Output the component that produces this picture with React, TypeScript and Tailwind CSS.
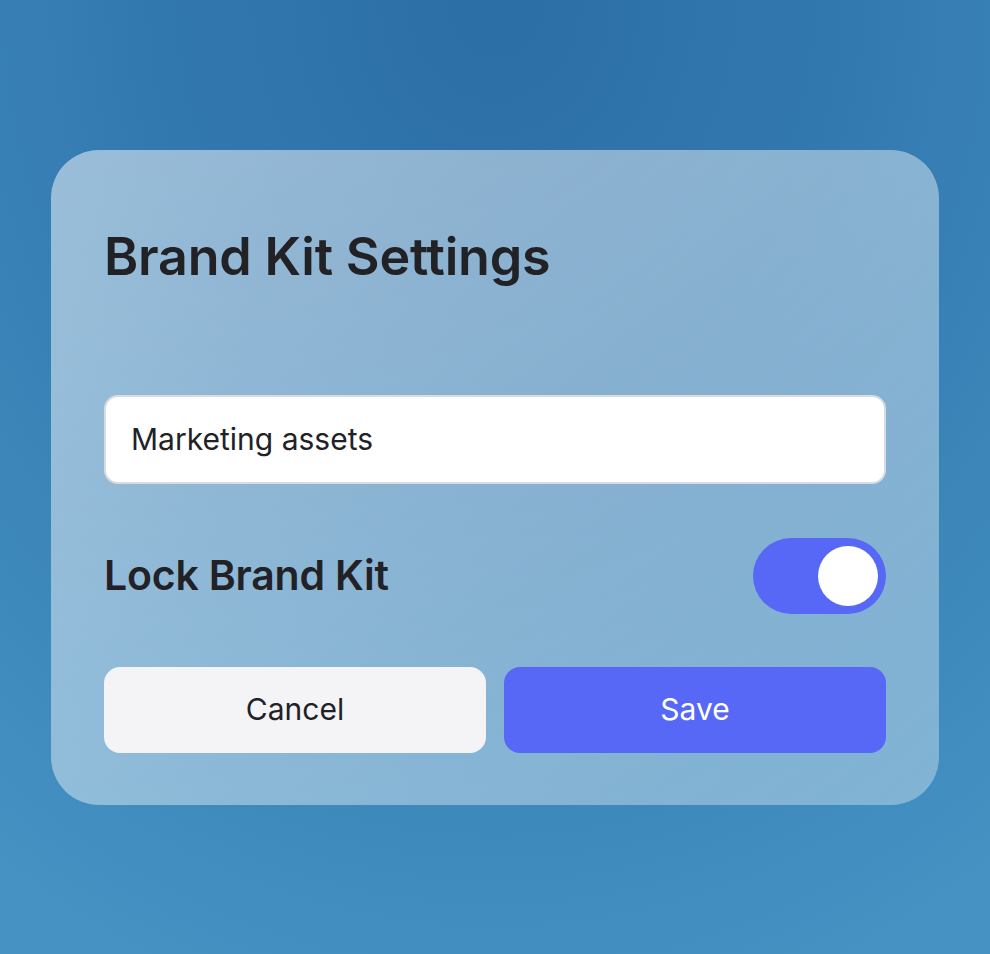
import { useState } from 'react';

export default function App() {
  const [name, setName] = useState('Marketing assets');
  const [locked, setLocked] = useState(true);

  return (
    <main
      className="h-screen w-full flex items-center justify-center bg-[radial-gradient(ellipse_90%_110%_at_50%_0%,#2c6ea6_0%,#3279b0_40%,#4592c3_100%)]"
      style={{ fontFamily: 'Inter, "Noto Sans", sans-serif' }}
    >
      <div className="w-[888px] rounded-[48px] bg-gradient-to-br from-white/50 to-white/33 px-[53px] pt-[81px] pb-[52px]">
        {/* Header */}
        <h1 className="text-[52px] leading-none font-semibold text-[#222226] tracking-[-0.2px]">
          Brand Kit Settings
        </h1>

        {/* Name field */}
        <input
          value={name}
          onChange={(e) => setName(e.target.value)}
          className="mt-[112px] block w-full h-[89px] rounded-[14px] border-2 border-[#d8dce2] bg-white px-[25px] text-[30px] text-[#222226] outline-none"
        />

        {/* Lock toggle row */}
        <div className="mt-[54px] flex items-center justify-between">
          <span className="text-[41px] font-semibold text-[#222226] tracking-[-0.2px]">Lock Brand Kit</span>
          <button
            onClick={() => setLocked(!locked)}
            className={`w-[133px] h-[76px] rounded-full p-[8px] flex items-center ${locked ? 'bg-[#5668f5] justify-end' : 'bg-gray-300 justify-start'}`}
          >
            <span className="w-[60px] h-[60px] rounded-full bg-white block" />
          </button>
        </div>

        {/* Actions */}
        <div className="mt-[53px] grid grid-cols-2 gap-[18px]">
          <button className="h-[86px] rounded-[16px] bg-[#f4f4f6] text-[30px] font-normal text-[#222226]">
            Cancel
          </button>
          <button className="h-[86px] rounded-[16px] bg-[#5668f5] text-[30px] font-normal text-white">
            Save
          </button>
        </div>
      </div>
    </main>
  );
}
